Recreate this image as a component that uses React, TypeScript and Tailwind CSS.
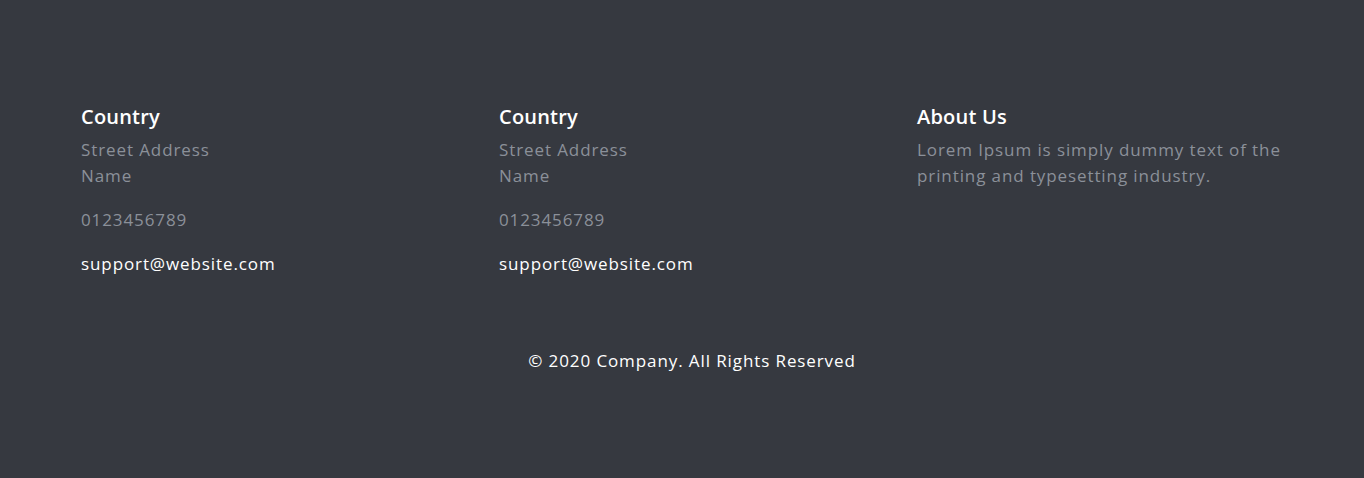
import React from "react";

interface Office {
  country: string;
  street: string;
  name: string;
  phone: string;
  email: string;
}

const offices: Office[] = [
  { country: "Country", street: "Street Address", name: "Name", phone: "0123456789", email: "support@website.com" },
  { country: "Country", street: "Street Address", name: "Name", phone: "0123456789", email: "support@website.com" },
];

const OfficeBlock: React.FC<{ office: Office }> = ({ office }) => (
  <div>
    <h3 className="text-[20px] font-semibold leading-[30px] text-white tracking-[0.2px]">{office.country}</h3>
    <p className="mt-[5px] text-[17px] leading-[26px] tracking-[0.9px] text-[#8b9099]">
      {office.street}
      <br />
      {office.name}
    </p>
    <p className="mt-[18px] text-[17px] leading-[26px] tracking-[0.9px] text-[#8b9099]">{office.phone}</p>
    <p className="mt-[18px] text-[17px] leading-[26px] tracking-[0.9px] text-white">{office.email}</p>
  </div>
);

export default function App() {
  return (
    <footer
      className="h-[478px] w-full bg-[#363940] pt-[102px]"
      style={{ fontFamily: '"Open Sans", "Liberation Sans", sans-serif' }}
    >
      <div className="grid grid-cols-[418px_418px_1fr] pl-[81px] pr-[60px]">
        {offices.map((o, i) => (
          <OfficeBlock key={i} office={o} />
        ))}
        <div>
          <h3 className="text-[20px] font-semibold leading-[30px] text-white tracking-[0.2px]">About Us</h3>
          <p className="mt-[5px] max-w-[378px] text-[17px] leading-[26px] tracking-[0.9px] text-[#8b9099]">
            Lorem Ipsum is simply dummy text of the printing and typesetting industry.
          </p>
        </div>
      </div>
      <p className="mt-[71px] pl-[20px] text-center text-[17px] leading-[26px] tracking-[0.9px] text-white">
        © 2020 Company. All Rights Reserved
      </p>
    </footer>
  );
}
